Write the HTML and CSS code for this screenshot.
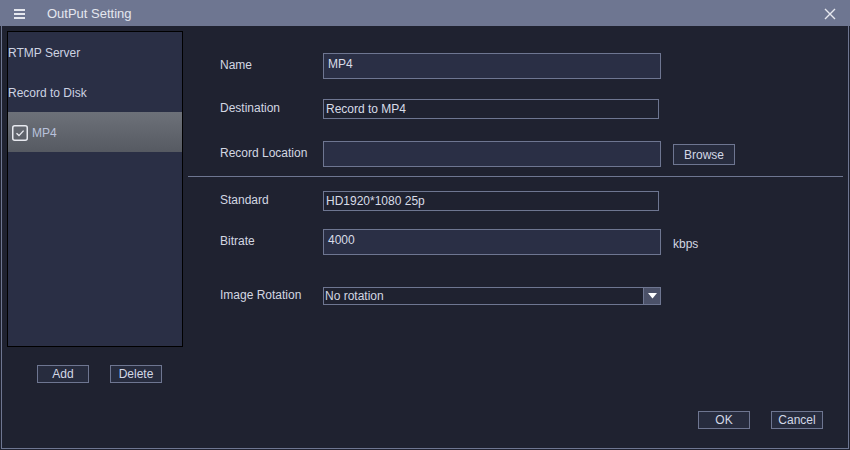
FILE: index.html
```html
<!DOCTYPE html>
<html>
<head>
<meta charset="utf-8">
<link rel="stylesheet" href="styles.css">
</head>
<body>
<div class="window">
  <div class="titlebar">
    <svg class="menu-icon" width="12" height="10" viewBox="0 0 12 10"><rect x="0" y="0" width="11" height="2" fill="#e6e8ef"/><rect x="0" y="4" width="11" height="2" fill="#e6e8ef"/><rect x="0" y="8" width="11" height="2" fill="#e6e8ef"/></svg>
    <span class="title">OutPut Setting</span>
    <svg class="close-icon" width="12" height="12" viewBox="0 0 12 12"><path d="M1 1 L11 11 M11 1 L1 11" stroke="#e6e8ef" stroke-width="1.4" fill="none"/></svg>
  </div>
  <div class="frame">
    <div class="content">
      <div class="left">
        <div class="list">
          <div class="item">RTMP Server</div>
          <div class="item">Record to Disk</div>
          <div class="item selected">
            <svg class="check" width="16" height="16" viewBox="0 0 16 16"><rect x="0.75" y="0.75" width="14.5" height="14.5" rx="2" fill="none" stroke="#e8eaf0" stroke-width="1.5"/><path d="M4.5 8.2 L7 10.6 L11.6 5.6" stroke="#e8eaf0" stroke-width="1.4" fill="none"/></svg>
            <span>MP4</span>
          </div>
        </div>
        <div class="list-buttons">
          <div class="btn small">Add</div>
          <div class="btn small">Delete</div>
        </div>
      </div>
      <div class="right">
        <div class="form">
          <div class="row r-name">
            <div class="label">Name</div>
            <div class="field tall filled top">MP4</div>
          </div>
          <div class="row r-dest">
            <div class="label">Destination</div>
            <div class="field short">Record to MP4</div>
          </div>
          <div class="row r-loc">
            <div class="label">Record Location</div>
            <div class="field tall filled"></div>
            <div class="btn browse">Browse</div>
          </div>
          <div class="separator"></div>
          <div class="row r-std">
            <div class="label">Standard</div>
            <div class="field short">HD1920*1080 25p</div>
          </div>
          <div class="row r-bit">
            <div class="label">Bitrate</div>
            <div class="field tall filled top">4000</div>
            <div class="unit">kbps</div>
          </div>
          <div class="row r-rot">
            <div class="label">Image Rotation</div>
            <div class="combo">
              <span class="combo-text">No rotation</span>
              <span class="combo-btn"><svg width="9" height="6" viewBox="0 0 9 6"><path d="M0 0 L9 0 L4.5 5.5 Z" fill="#ffffff"/></svg></span>
            </div>
          </div>
        </div>
        <div class="footer">
          <div class="btn small">OK</div>
          <div class="btn small">Cancel</div>
        </div>
      </div>
    </div>
  </div>
</div>
</body>
</html>
```
FILE: styles.css
```css
* { box-sizing: border-box; }
html, body { margin: 0; padding: 0; }
body {
  width: 850px;
  height: 450px;
  background: #1f2230;
  font-family: "Liberation Sans", Arial, sans-serif;
  font-size: 12px;
  color: #d3d7e2;
  overflow: hidden;
}
.window { width: 850px; height: 450px; display: flex; flex-direction: column; }
.titlebar {
  height: 26px;
  background: #6e7691;
  display: flex;
  align-items: center;
  flex: none;
}
.menu-icon { margin-left: 14px; margin-top: 1px; }
.title {
  margin-left: 21px;
  font-size: 13px;
  color: #e4e7ef;
  flex: 1;
}
.close-icon { margin-right: 14px; margin-top: 1px; }
.frame {
  flex: 1;
  padding: 0 1px 1px 1px;
  display: flex;
}
.content {
  flex: 1;
  border: 1px solid #6e7691;
  border-top: none;
  display: flex;
}
.left {
  width: 186px;
  padding: 5px 0 0 5px;
  flex: none;
}
.list {
  width: 176px;
  height: 316px;
  background: #2a2f45;
  border: 1px solid #000;
}
.item {
  height: 40px;
  display: flex;
  align-items: center;
  color: #cdd3e2;
  padding-top: 2px;
}
.item.selected {
  background: linear-gradient(#6d7179, #565a62);
  color: #b9c2dc;
  padding-left: 4px;
}
.check { margin-right: 4px; }
.list-buttons {
  display: flex;
  gap: 21px;
  padding-left: 30px;
  margin-top: 18px;
}
.btn {
  border: 1px solid #6e7691;
  background: #272c3e;
  color: #d3d8e6;
  display: flex;
  align-items: center;
  justify-content: center;
}
.btn.small { width: 52px; height: 18px; }
.right {
  flex: 1;
  display: flex;
  flex-direction: column;
  padding-right: 5px;
}
.form { padding-top: 27px; }
.row {
  display: flex;
  align-items: center;
  padding-left: 32px;
}
.label { width: 103px; flex: none; margin-top: -3px; }
.field {
  border: 1px solid #6e7691;
  color: #d8dce7;
  display: flex;
  align-items: center;
  padding-left: 2px;
}
.field.tall { width: 338px; height: 26px; }
.field.short { width: 336px; height: 20px; }
.field.filled { background: #2a2f45; }
.field.top { align-items: flex-start; padding-top: 3px; padding-left: 4px; }
.r-dest { margin-top: 20px; }
.r-loc { margin-top: 22px; }
.browse { width: 62px; height: 21px; margin-left: 12px; margin-top: 1px; }
.separator {
  height: 1px;
  background: #6e7691;
  margin-top: 9px;
}
.r-std { margin-top: 14px; }
.r-bit { margin-top: 18px; }
.unit { margin-left: 12px; margin-top: 4px; }
.r-rot { margin-top: 32px; }
.combo {
  width: 338px;
  height: 18px;
  border: 1px solid #6e7691;
  display: flex;
  align-items: center;
}
.combo-text { flex: 1; padding-left: 1px; }
.combo-btn {
  width: 17px;
  height: 16px;
  background: #4b5168;
  border-left: 1px solid #6e7691;
  display: flex;
  align-items: center;
  justify-content: center;
}
.footer {
  margin-top: auto;
  margin-bottom: 19px;
  display: flex;
  justify-content: flex-end;
  gap: 21px;
  padding-right: 20px;
}
```
